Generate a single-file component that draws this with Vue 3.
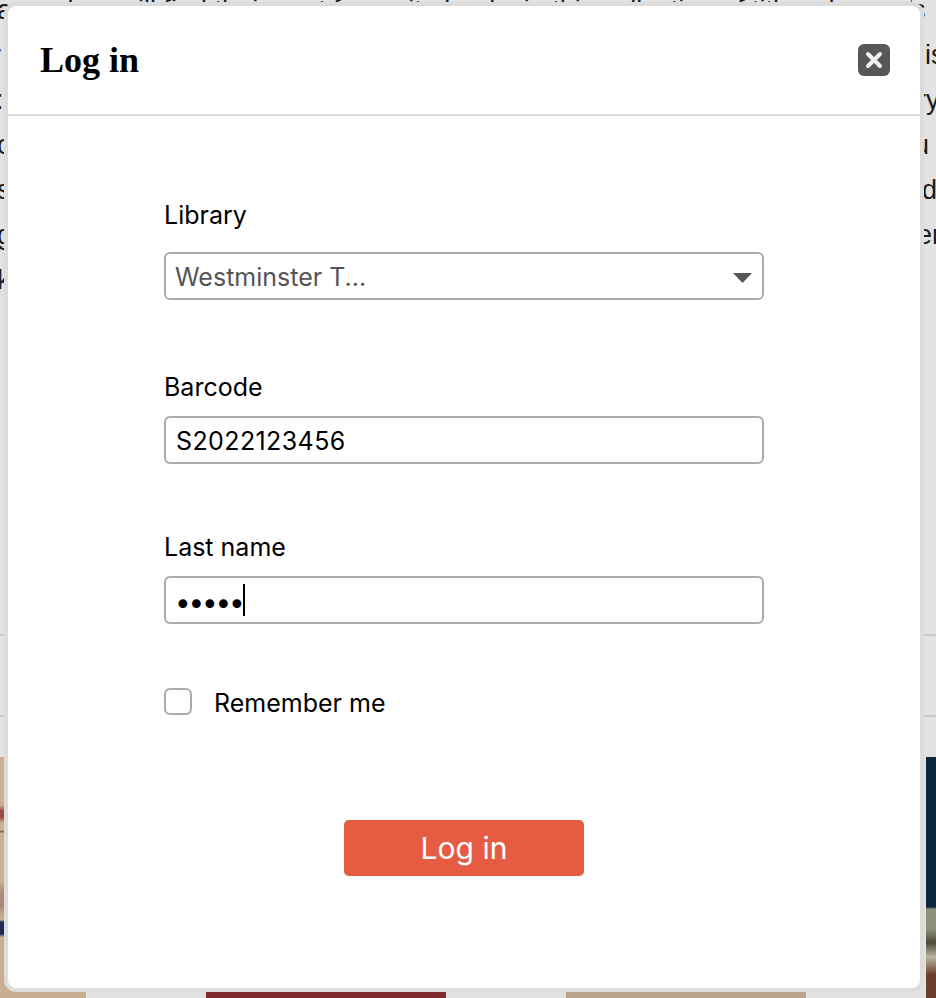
<template>
  <div class="page">
    <div class="article">
      <p v-for="line in lines" :key="line.left" class="line">
        <span class="line__left" :style="{ marginLeft: line.lead + 'px' }">{{ line.left }}</span>
        <span class="line__right" :style="{ width: 11 - line.shift + 'px' }">{{ line.right }}</span>
      </p>
    </div>
    <div class="rule"></div>
    <div class="rule rule--second"></div>
    <div class="books">
      <div class="book book--tan-art"></div>
      <div class="book book--red"></div>
      <div class="book book--tan"></div>
      <div class="book book--navy"></div>
    </div>

    <div class="modal">
      <header class="modal__header">
        <h2 class="modal__title">Log in</h2>
        <button class="close" type="button" aria-label="Close">
          <svg width="32" height="32" viewBox="0 0 32 32">
            <path d="M10 10 L22 22 M22 10 L10 22" stroke="#f0f0f0" stroke-width="4" stroke-linecap="round" fill="none" />
          </svg>
        </button>
      </header>
      <form class="modal__body" @submit.prevent>
        <label class="field field--library">
          <span class="field__label">Library</span>
          <span class="control-wrap">
            <select class="control control--select">
              <option>Westminster T...</option>
            </select>
            <svg class="select-arrow" width="19" height="10" viewBox="0 0 19 10">
              <polygon points="0,0 19,0 9.5,10" fill="#555" />
            </svg>
          </span>
        </label>
        <label class="field">
          <span class="field__label">Barcode</span>
          <input class="control control--text" type="text" value="S2022123456" />
        </label>
        <label class="field">
          <span class="field__label">Last name</span>
          <span class="control-wrap">
            <input class="control control--password" type="password" value="smith" />
            <span class="caret"></span>
          </span>
        </label>
        <label class="remember">
          <span class="remember__box"></span>
          <span class="remember__text">Remember me</span>
        </label>
        <button class="submit" type="submit">Log in</button>
      </form>
    </div>
  </div>
</template>

<script setup>
const lines = [
  { left: 'a readers will find their next favourite books in this collection of titles chosen by our staff', lead: -3, right: 's', shift: -13 },
  { left: 'r', lead: -8, right: 'is', shift: 0 },
  { left: ':', lead: -4, right: 'ry', shift: -8 },
  { left: 'c', lead: -3, right: 'u', shift: -11 },
  { left: 's', lead: -3, right: 'd', shift: -3 },
  { left: 'g', lead: -3, right: 'er', shift: -8 },
  { left: 'k', lead: -3, right: '', shift: 0 }
]
</script>

<style>
html, body { margin: 0; background: #e2e2e2; }
</style>

<style scoped>
.page {
  position: relative;
  width: 936px;
  height: 998px;
  overflow: hidden;
  background: #e2e2e2;
  font-family: Inter, "Noto Sans", sans-serif;
  color: #000;
}

.article {
  display: flow-root;
  height: 634px;
  font-family: "Liberation Sans", sans-serif;
  font-size: 27px;
  color: #1c1c1c;
}
.line {
  display: flex;
  margin: 0;
  height: 45px;
  line-height: 45px;
  white-space: nowrap;
}
.line:first-child { margin-top: -12px; }
.line__left { flex: 1 1 0; min-width: 0; overflow: hidden; }
.line__right { flex: none; }

.rule { height: 2px; background: #c9c9c9; }
.rule--second { margin-top: 79px; }

.books { display: flex; gap: 120px; margin: 40px 0 0 -154px; }
.book { flex: none; width: 240px; height: 241px; }
.book--tan-art {
  background: linear-gradient(to bottom,
    #c8b197 0 48px, #9c4a48 54px 60px, #c8b197 66px 73px, #8a6a5a 74px 75px, #c8b197 76px 125px,
    #a98a7a 135px 150px, #c6ad92 158px 163px, #1f2a52 165px 177px, #c8ae92 180px);
}
.book--red { background: #7f2a2e; }
.book--tan { background: #b9a58c; }
.book--navy {
  background: linear-gradient(to bottom,
    #0e2740 0 150px, #8a9178 152px 172px, #4f4a3a 186px, #b9b6a0 200px, #6a3e2c 218px);
}

.modal {
  position: absolute;
  left: 4px;
  top: 2px;
  box-sizing: border-box;
  width: 920px;
  height: 990px;
  background: #fff;
  border: 4px solid #dcdcdc;
  border-radius: 12px;
  display: flex;
  flex-direction: column;
}
.modal__header {
  flex: none;
  box-sizing: border-box;
  height: 110px;
  border-bottom: 2px solid #dcdcdc;
  display: flex;
  align-items: center;
  justify-content: space-between;
  padding: 0 30px 0 32px;
}
.modal__title {
  margin: 0;
  font-family: "Liberation Serif", serif;
  font-size: 36px;
  font-weight: 700;
  line-height: 1;
}
.close {
  width: 32px;
  height: 32px;
  padding: 0;
  border: 0;
  border-radius: 6px;
  background: #575757;
  display: flex;
}
.close svg { filter: blur(0.5px); }

.modal__body {
  padding: 83px 156px 0;
  display: flex;
  flex-direction: column;
  font-size: 25px;
}
.field { display: flex; flex-direction: column; gap: 13px; margin-bottom: 67px; }
.field--library { gap: 21px; margin-bottom: 71px; }
.field__label { height: 32px; line-height: 32px; }
.control-wrap { position: relative; display: block; height: 48px; }
.control {
  display: block;
  box-sizing: border-box;
  width: 100%;
  height: 48px;
  margin: 0;
  padding: 2px 10px 0;
  background: #fff;
  border: 2px solid #a8abb0;
  border-radius: 6px;
  font: inherit;
  color: #000;
  outline: none;
}
.control--select {
  appearance: none;
  padding-left: 9px;
  color: #555;
}
.control--text { letter-spacing: 0.4px; }
.control--password {
  padding: 8px 8px 0;
  font-family: "DejaVu Sans", sans-serif;
  font-size: 30px;
  letter-spacing: -4.2px;
}
.select-arrow { position: absolute; right: 12px; top: 21px; filter: blur(0.4px); }
.caret { position: absolute; left: 79px; top: 8px; width: 2px; height: 32px; background: #000; }

.remember { display: flex; align-items: center; gap: 22px; margin-top: -3px; height: 27px; }
.remember__box {
  box-sizing: border-box;
  width: 28px;
  height: 27px;
  border: 2px solid #a8abb0;
  border-radius: 6px;
  background: #fff;
}
.remember__text { padding-top: 2px; }
.submit {
  align-self: center;
  width: 240px;
  height: 56px;
  margin-top: 105px;
  border: 0;
  border-radius: 5px;
  background: #e55c42;
  color: #fff;
  font: inherit;
  font-size: 30px;
}
</style>
